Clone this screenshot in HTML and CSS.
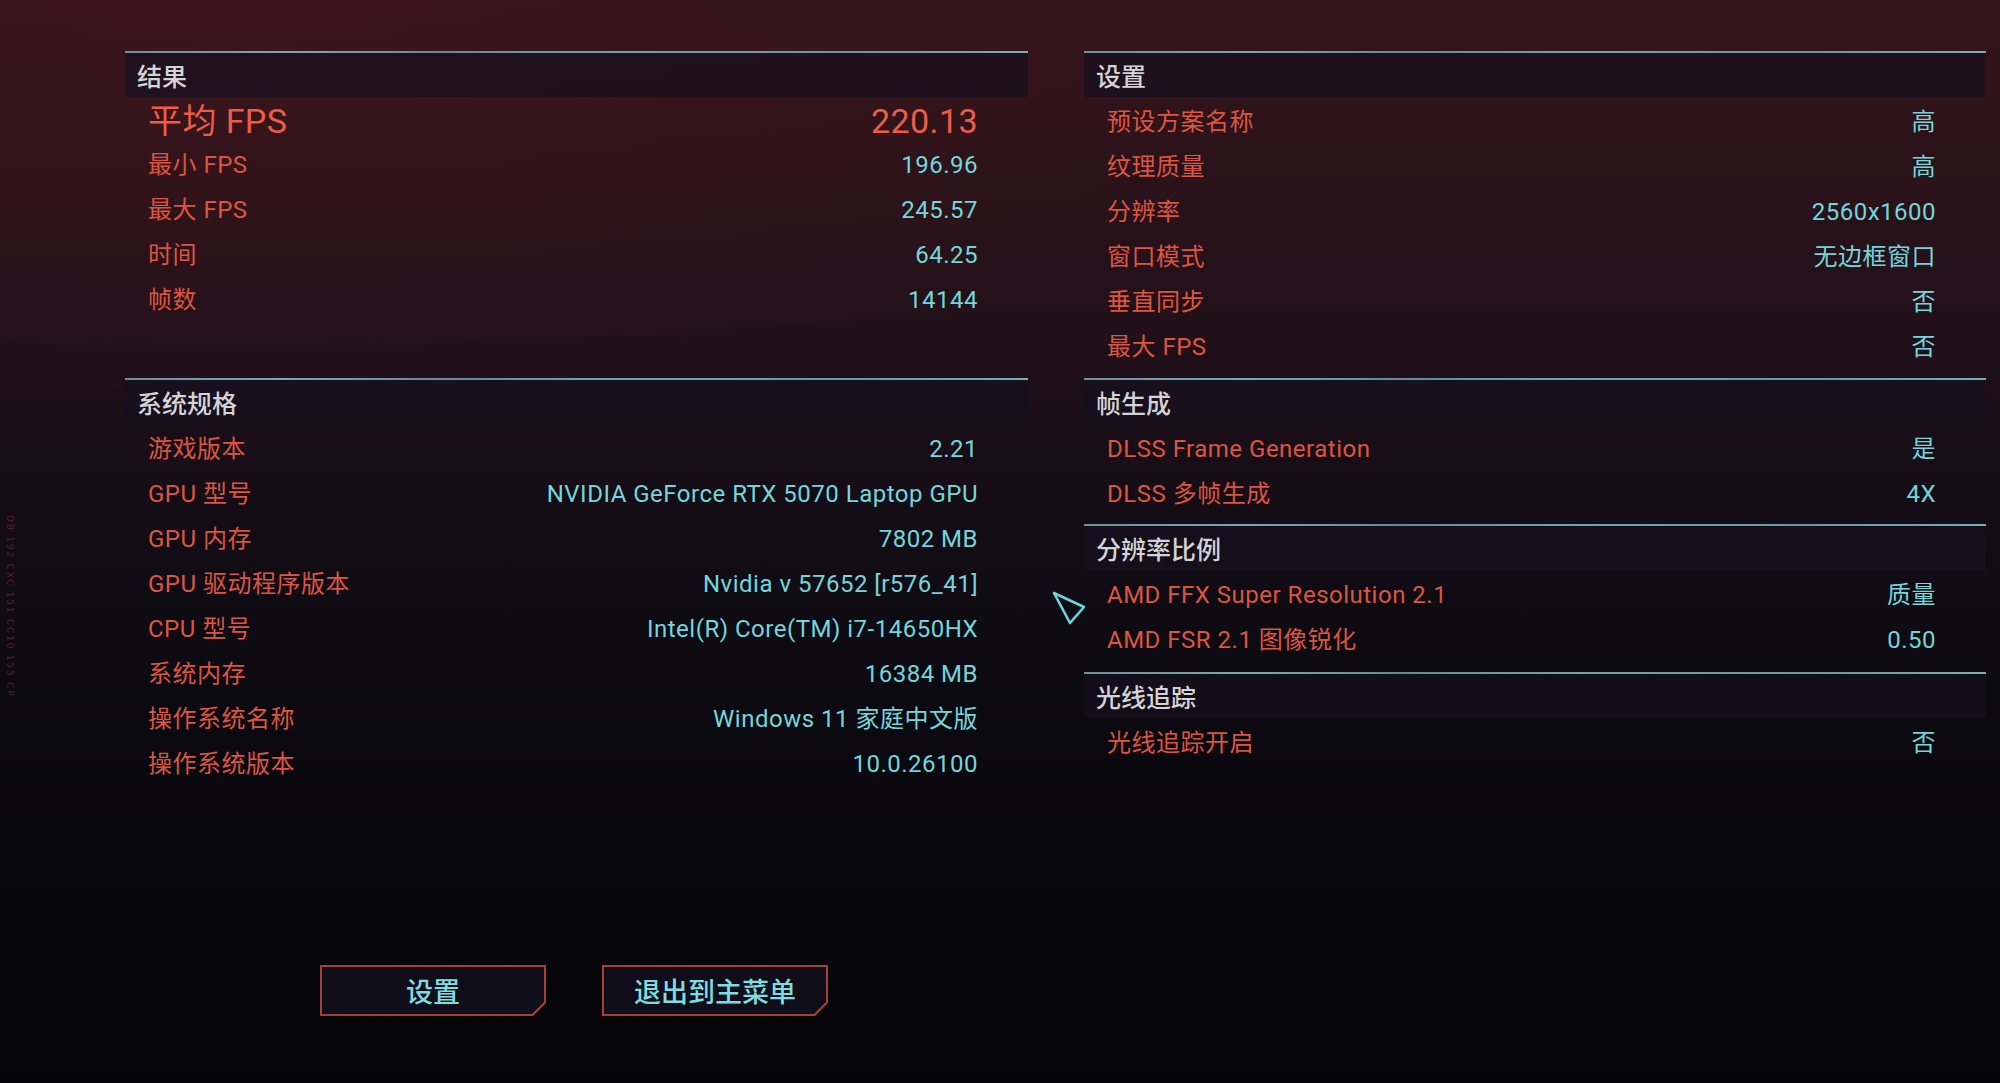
FILE: index.html
```html
<!DOCTYPE html>
<html lang="zh-CN">
<head>
<meta charset="utf-8">
<title>基准测试结果</title>
<link rel="stylesheet" href="styles.css">
</head>
<body>
<div class="page">
  <div class="grid">
    <section class="sec">
      <div class="sec-head">结果</div>
      <div class="row row-big"><span class="lbl">平均 FPS</span><span class="val">220.13</span></div>
      <div class="row"><span class="lbl">最小 FPS</span><span class="val">196.96</span></div>
      <div class="row"><span class="lbl">最大 FPS</span><span class="val">245.57</span></div>
      <div class="row"><span class="lbl">时间</span><span class="val">64.25</span></div>
      <div class="row"><span class="lbl">帧数</span><span class="val">14144</span></div>
    </section>

    <section class="sec sec-first">
      <div class="sec-head">设置</div>
      <div class="row"><span class="lbl">预设方案名称</span><span class="val">高</span></div>
      <div class="row"><span class="lbl">纹理质量</span><span class="val">高</span></div>
      <div class="row"><span class="lbl">分辨率</span><span class="val">2560x1600</span></div>
      <div class="row"><span class="lbl">窗口模式</span><span class="val">无边框窗口</span></div>
      <div class="row"><span class="lbl">垂直同步</span><span class="val">否</span></div>
      <div class="row"><span class="lbl">最大 FPS</span><span class="val">否</span></div>
    </section>

    <section class="sec">
      <div class="sec-head">系统规格</div>
      <div class="row"><span class="lbl">游戏版本</span><span class="val">2.21</span></div>
      <div class="row"><span class="lbl">GPU 型号</span><span class="val">NVIDIA GeForce RTX 5070 Laptop GPU</span></div>
      <div class="row"><span class="lbl">GPU 内存</span><span class="val">7802 MB</span></div>
      <div class="row"><span class="lbl">GPU 驱动程序版本</span><span class="val">Nvidia v 57652 [r576_41]</span></div>
      <div class="row"><span class="lbl">CPU 型号</span><span class="val">Intel(R) Core(TM) i7-14650HX</span></div>
      <div class="row"><span class="lbl">系统内存</span><span class="val">16384 MB</span></div>
      <div class="row"><span class="lbl">操作系统名称</span><span class="val">Windows 11 家庭中文版</span></div>
      <div class="row"><span class="lbl">操作系统版本</span><span class="val">10.0.26100</span></div>
    </section>

    <div class="stack">
      <section class="sec sec-mid">
        <div class="sec-head">帧生成</div>
        <div class="row"><span class="lbl">DLSS Frame Generation</span><span class="val">是</span></div>
        <div class="row"><span class="lbl">DLSS 多帧生成</span><span class="val">4X</span></div>
      </section>
      <section class="sec sec-mid2">
        <div class="sec-head">分辨率比例</div>
        <div class="row"><span class="lbl">AMD FFX Super Resolution 2.1</span><span class="val">质量</span></div>
        <div class="row"><span class="lbl">AMD FSR 2.1 图像锐化</span><span class="val">0.50</span></div>
      </section>
      <section class="sec">
        <div class="sec-head">光线追踪</div>
        <div class="row"><span class="lbl">光线追踪开启</span><span class="val">否</span></div>
      </section>
    </div>
  </div>

  <div class="footer">
    <button class="btn"><span class="btn-in">设置</span></button>
    <button class="btn"><span class="btn-in">退出到主菜单</span></button>
  </div>
</div>

<div class="side-code">DB 192 CXC 151 CC10 155 CP</div>

<svg class="cursor" width="40" height="40" viewBox="0 0 40 40">
  <polygon points="4,5 34,19 20,35" fill="none" stroke="#6fd3da" stroke-width="2.6" stroke-linejoin="round"/>
</svg>
</body>
</html>
```

FILE: styles.css
```css
html, body {
  margin: 0;
  padding: 0;
}

body {
  width: 2000px;
  height: 1083px;
  overflow: hidden;
  position: relative;
  font-family: Roboto, "Noto Sans CJK SC", "Noto Sans", sans-serif;
  background:
    radial-gradient(ellipse 1100px 420px at 12% 0%, rgba(70, 22, 28, 0.45), rgba(70, 22, 28, 0) 100%),
    linear-gradient(to bottom,
      #34151b 0%,
      #2d1319 12%,
      #24111a 27%,
      #170e17 43%,
      #0e0b13 58%,
      #09080d 78%,
      #050407 100%);
}

.page {
  padding: 51px 14px 0 125px;
}

.grid {
  display: grid;
  grid-template-columns: 903px 902px;
  column-gap: 56px;
  align-items: start;
}

.sec {
  border-top: 2px solid #6b9ba0;
  border-image: linear-gradient(to right, #6a9297 0%, #7aa9ad 18%, #628e93 35%, #73a3a8 55%, #6a989d 80%, #7eadb1 100%) 1;
}

.sec-first {
  padding-bottom: 11px;
}

.sec-mid {
  padding-bottom: 10px;
}

.sec-mid2 {
  padding-bottom: 12px;
}

.sec-head {
  height: 44px;
  display: flex;
  align-items: center;
  padding-left: 12px;
  background: rgba(22, 17, 30, 0.72);
  color: #d4d4d6;
  font-size: 25px;
  font-weight: 500;
}

.row {
  box-sizing: border-box;
  height: 45px;
  display: flex;
  align-items: baseline;
  justify-content: space-between;
  padding: 5px 50px 0 23px;
}

.row-big {
  height: 43px;
  padding-top: 4px;
}

.lbl,
.val {
  line-height: 41px;
  font-size: 24px;
  letter-spacing: 0.5px;
}

.lbl {
  color: #dd5540;
}

.val {
  color: #74d6db;
}

.row-big .lbl,
.row-big .val {
  color: #ef5b47;
  font-size: 34px;
  letter-spacing: 0.4px;
}

.footer {
  margin-top: 181px;
  padding-left: 195px;
  display: flex;
  gap: 56px;
}

.btn {
  width: 226px;
  height: 51px;
  padding: 2px;
  border: 0;
  background: #a8403a;
  clip-path: polygon(0 0, 100% 0, 100% calc(100% - 13px), calc(100% - 13px) 100%, 0 100%);
  cursor: default;
}

.btn-in {
  display: flex;
  width: 100%;
  height: 100%;
  align-items: center;
  justify-content: center;
  background: #100e18;
  clip-path: polygon(0 0, 100% 0, 100% calc(100% - 12px), calc(100% - 12px) 100%, 0 100%);
  color: #7fdde2;
  font-family: "Noto Sans CJK SC", sans-serif;
  font-size: 27px;
  font-weight: 500;
}

.side-code {
  position: absolute;
  left: 5px;
  top: 515px;
  writing-mode: vertical-rl;
  font-family: "DejaVu Sans", sans-serif;
  font-size: 9px;
  letter-spacing: 1.8px;
  color: #5a2029;
}

.cursor {
  position: absolute;
  left: 1050px;
  top: 588px;
}
```
